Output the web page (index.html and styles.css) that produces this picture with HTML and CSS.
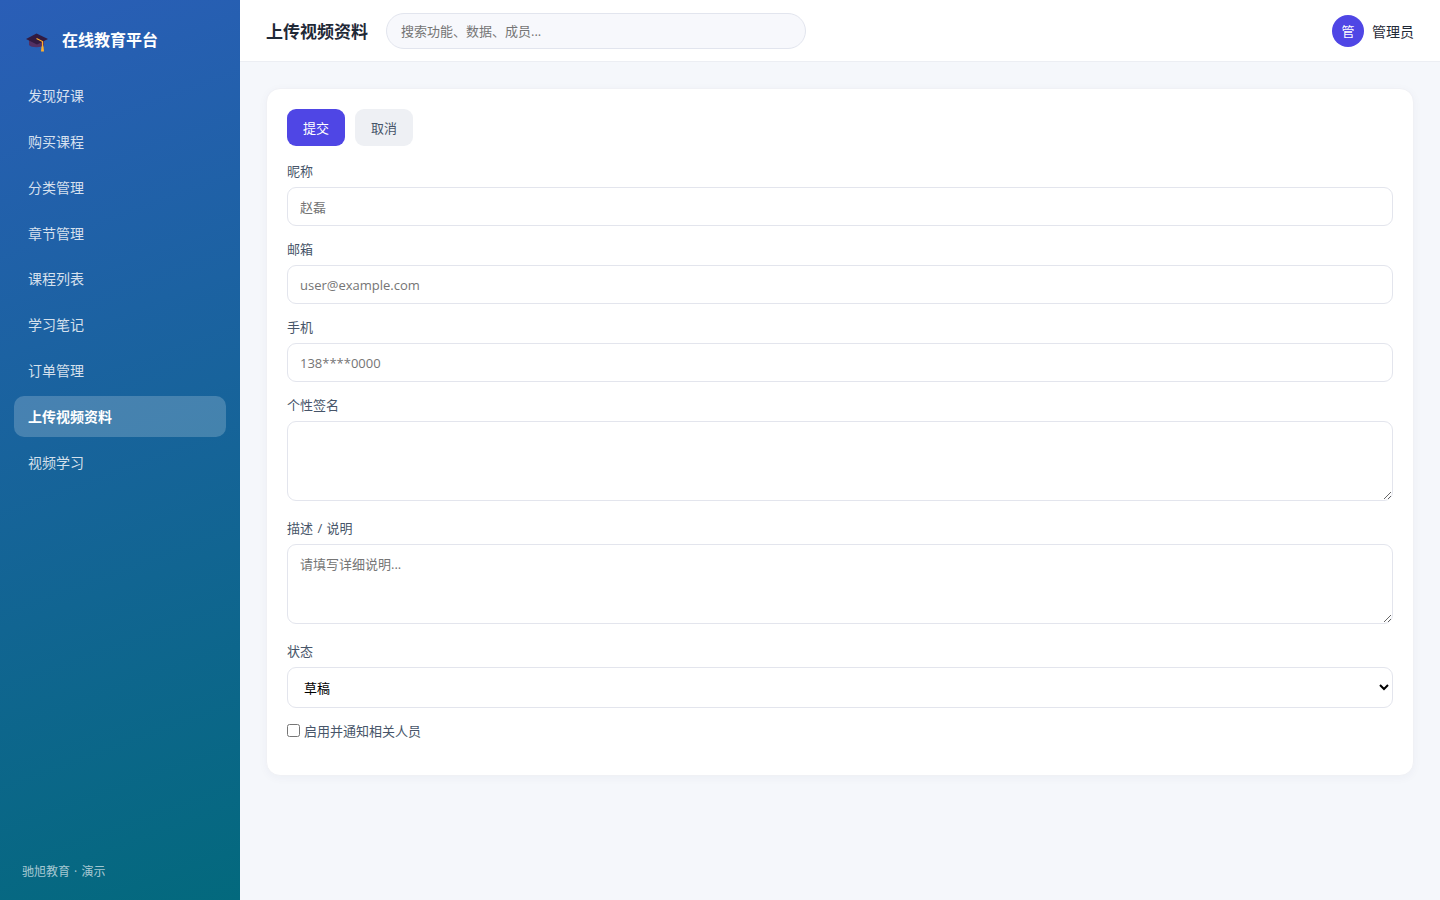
FILE: index.html
```html
<!DOCTYPE html>
<html lang="zh-CN">
<head>
    <meta charset="UTF-8">
    <meta name="viewport" content="width=device-width, initial-scale=1.0">
    <title>上传视频资料</title>
    <link rel="stylesheet" href="styles.css">
</head>
<body>
    <div class="layout">
        <aside class="sidebar">
            <div class="brand">
                <svg class="brand-icon" viewBox="0 0 22 20">
                    <path d="M3 7v5c2 3 13 3 15 0V7z" fill="#533062"/>
                    <path d="M0 6L10.500 0.500 22 6l-11 5.500z" fill="#321b41"/>
                    <path d="M10.500 5.500l6 3v6" fill="none" stroke="#ffb02e" stroke-width="1.200"/>
                    <path d="M15.500 13.500h2l.5 5h-3z" fill="#ffb02e"/>
                </svg>
                <span>在线教育平台</span>
            </div>
            <nav class="nav">
                <a class="nav-item">发现好课</a>
                <a class="nav-item">购买课程</a>
                <a class="nav-item">分类管理</a>
                <a class="nav-item">章节管理</a>
                <a class="nav-item">课程列表</a>
                <a class="nav-item">学习笔记</a>
                <a class="nav-item">订单管理</a>
                <a class="nav-item active">上传视频资料</a>
                <a class="nav-item">视频学习</a>
            </nav>
            <div class="sidebar-foot">驰旭教育 · 演示</div>
        </aside>
        <div class="main">
            <header class="topbar">
                <h1>上传视频资料</h1>
                <input class="search" type="text" placeholder="搜索功能、数据、成员...">
                <div class="user">
                    <span class="avatar">管</span>
                    <span>管理员</span>
                </div>
            </header>
            <main class="content">
                <form class="card">
                    <div class="actions">
                        <button type="button" class="btn primary">提交</button>
                        <button type="button" class="btn">取消</button>
                    </div>
                    <div class="field">
                        <label for="nickname">昵称</label>
                        <input id="nickname" type="text" placeholder="赵磊">
                    </div>
                    <div class="field">
                        <label for="email">邮箱</label>
                        <input id="email" type="text" placeholder="user@example.com">
                    </div>
                    <div class="field">
                        <label for="phone">手机</label>
                        <input id="phone" type="text" placeholder="138****0000">
                    </div>
                    <div class="field field-area">
                        <label for="sign">个性签名</label>
                        <textarea id="sign"></textarea>
                    </div>
                    <div class="field field-area">
                        <label for="desc">描述 / 说明</label>
                        <textarea id="desc" placeholder="请填写详细说明..."></textarea>
                    </div>
                    <div class="field">
                        <label for="status">状态</label>
                        <select id="status">
                            <option>草稿</option>
                            <option>已发布</option>
                        </select>
                    </div>
                    <label class="check"><input type="checkbox">启用并通知相关人员</label>
                </form>
            </main>
        </div>
    </div>
</body>
</html>
```

FILE: styles.css
```css
* {
    box-sizing: border-box;
}
body {
    margin: 0;
    font-family: "Open Sans", "Noto Sans CJK SC", sans-serif;
    font-size: 14px;
    color: #1f2937;
    background: #f5f7fb;
}
input, textarea, select, button {
    font-family: inherit;
    font-size: 13px;
}
.layout {
    display: flex;
    height: 100vh;
}
.sidebar {
    width: 240px;
    flex-shrink: 0;
    display: flex;
    flex-direction: column;
    padding: 20px 14px;
    color: #fff;
    background: linear-gradient(160deg, #2a5eb7, #03697d);
}
.brand {
    display: flex;
    align-items: center;
    gap: 14px;
    height: 38px;
    padding-left: 12px;
    margin-bottom: 17px;
    font-size: 16px;
    font-weight: bold;
}
.brand-icon {
    width: 22px;
    height: 20px;
    margin-top: 8px;
}
.nav {
    display: flex;
    flex-direction: column;
    gap: 5px;
}
.nav-item {
    height: 40.86px;
    line-height: 42px;
    padding: 0 14px;
    border-radius: 10px;
    color: rgba(255, 255, 255, 0.82);
}
.nav-item.active {
    background: rgba(255, 255, 255, 0.2);
    color: #fff;
    font-weight: bold;
}
.sidebar-foot {
    margin-top: auto;
    padding-left: 8px;
    font-size: 12px;
    line-height: 17px;
    word-spacing: 1px;
    color: rgba(255, 255, 255, 0.65);
}
.main {
    flex: 1;
    min-width: 0;
}
.topbar {
    display: flex;
    align-items: center;
    height: 62px;
    padding: 0 26px;
    background: #fff;
    border-bottom: 1px solid #eceef3;
}
.topbar h1 {
    margin: 0;
    font-size: 17px;
}
.search {
    width: 420px;
    height: 36px;
    margin-left: 18px;
    padding: 0 14px;
    border: 1px solid #e2e5ee;
    border-radius: 18px;
    background: #f7f8fc;
}
.user {
    display: flex;
    align-items: center;
    gap: 8px;
    margin-left: auto;
}
.avatar {
    width: 32px;
    height: 32px;
    line-height: 32px;
    border-radius: 50%;
    background: #4f46e5;
    color: #fff;
    font-size: 13px;
    text-align: center;
}
.content {
    padding: 26px;
}
.card {
    height: 688px;
    padding: 20px;
    background: #fff;
    border: 1px solid #f0f1f5;
    border-radius: 14px;
    box-shadow: 0 2px 10px rgba(30, 40, 90, 0.04);
}
.actions {
    display: flex;
    gap: 10px;
    margin-bottom: 18px;
}
.btn {
    width: 58px;
    height: 37px;
    padding: 0 0 1px;
    border: none;
    border-radius: 9px;
    background: #eef0f4;
    color: #475569;
}
.btn.primary {
    background: #4f46e5;
    color: #fff;
}
.field {
    margin-bottom: 16px;
}
.field-area {
    margin-bottom: 20px;
}
.field label {
    display: block;
    margin-bottom: 8px;
    font-size: 13px;
    line-height: 15px;
    word-spacing: 1px;
    color: #475569;
}
.field input, .field textarea, .field select {
    display: block;
    width: 100%;
    border: 1px solid #e3e5ed;
    border-radius: 9px;
    background: #fff;
}
.field input {
    height: 39px;
    padding: 0 12px;
}
.field textarea {
    height: 80px;
    padding: 9px 12px;
    resize: vertical;
}
.field select {
    height: 41px;
    padding: 0 12px;
    color: #000;
}
.check {
    display: flex;
    gap: 4px;
    font-size: 13px;
    line-height: 15px;
    color: #475569;
}
.check input {
    width: 13px;
    height: 13px;
    margin: 0;
}
```
